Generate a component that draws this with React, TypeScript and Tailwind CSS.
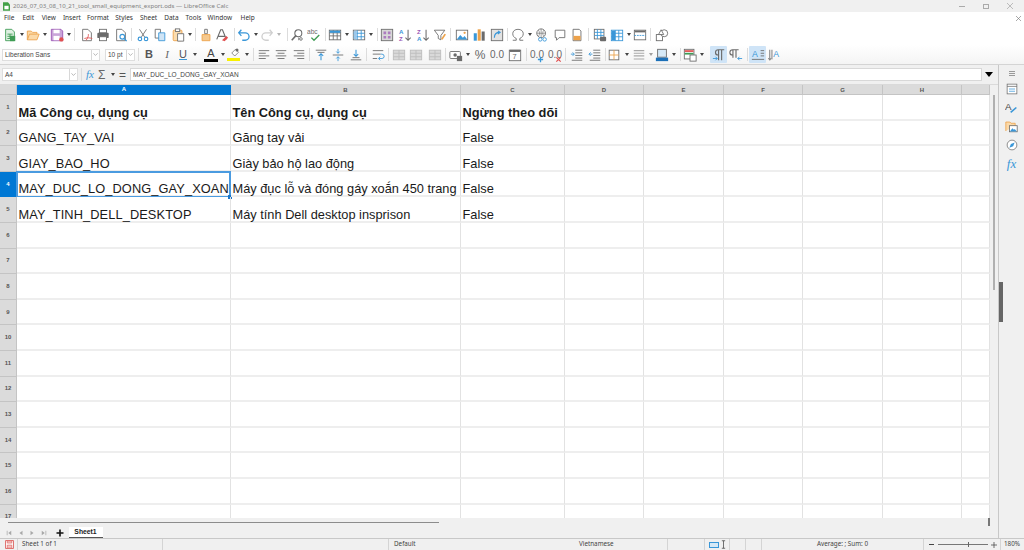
import React from 'react';

const GRAY = '#6b6b6b';
const BLUE = '#3a97d8';
const ORANGE = '#eda24a';
const GREEN = '#3f9c55';
const PURPLE = '#9a55b5';
const RED = '#e05050';

const paths: Record<string, React.ReactNode> = {
  newdoc: (
    <>
      <path d="M3 1.500h7l3 3v10H3z" fill="#dff0e2" stroke={GREEN} />
      <path d="M5 7h6M5 9.500h6M5 12h6M8 7v5" stroke={GREEN} />
      <rect x="8" y="9" width="6" height="6" fill={GREEN} />
    </>
  ),
  open: (
    <>
      <path d="M1.500 13.500v-10h4.500l1.500 1.500h5v2" fill="#fbd9a8" stroke={ORANGE} />
      <path d="M1.500 13.500l2.500-6.500h11l-2.500 6.500z" fill="#fbd9a8" stroke={ORANGE} />
    </>
  ),
  save: (
    <>
      <path d="M1.500 1.500h11l2 2v11h-13z" fill="#c9a5d8" stroke={PURPLE} />
      <rect x="4" y="2" width="7" height="4" fill="#fff" />
      <rect x="4" y="9" width="7" height="5" fill="#fff" />
      <circle cx="13" cy="13" r="2.500" fill={RED} />
    </>
  ),
  pdf: (
    <>
      <path d="M3 1.500h6l4 4v9H3z" fill="#fff" stroke={GRAY} />
      <path d="M7 14c2-3 3-5 2.500-7 M5 12c3-1 6-1 9 0" stroke={RED} fill="none" />
    </>
  ),
  print: (
    <>
      <rect x="4" y="1.500" width="8" height="4" fill="#fff" stroke={GRAY} />
      <rect x="1.500" y="5.500" width="13" height="6" rx="1" fill={GRAY} />
      <rect x="4" y="10" width="8" height="4.500" fill="#fff" stroke={GRAY} />
    </>
  ),
  preview: (
    <>
      <path d="M3 1.500h6l4 4v9H3z" fill="#fff" stroke={GRAY} />
      <circle cx="9.500" cy="10" r="2.700" fill="none" stroke={BLUE} strokeWidth="1.300" />
      <path d="M11.500 12l3 3" stroke={BLUE} strokeWidth="1.500" />
    </>
  ),
  cut: (
    <>
      <path d="M4 1.500l6 9M12 1.500l-6 9" stroke={GRAY} fill="none" />
      <circle cx="4.500" cy="12.500" r="2" fill="none" stroke={BLUE} strokeWidth="1.300" />
      <circle cx="11.500" cy="12.500" r="2" fill="none" stroke={BLUE} strokeWidth="1.300" />
    </>
  ),
  copy: (
    <>
      <path d="M2.500 1.500h6v10h-6z" fill="#fff" stroke={GRAY} />
      <path d="M6.500 5.500h7v9h-7z" fill="#cfe4f5" stroke={BLUE} />
    </>
  ),
  paste: (
    <>
      <rect x="2.500" y="2.500" width="10" height="12" rx="1" fill="#fbdcae" stroke={ORANGE} />
      <rect x="5" y="1" width="5" height="3" fill="#fff" stroke={GRAY} />
      <path d="M7.500 6.500h7v8.500h-7z" fill="#fff" stroke={GRAY} />
    </>
  ),
  clone: (
    <>
      <path d="M6.500 1.500h3v5h-3z" fill="#fff" stroke={GRAY} />
      <path d="M3.500 7.500h9v7h-9z" fill="#f6c98e" stroke={ORANGE} />
    </>
  ),
  clear: (
    <>
      <path d="M2 13L6.500 2h2L13 13M4 9.500h7" stroke={GRAY} strokeWidth="1.300" fill="none" />
      <path d="M8 14l5-5 2 2-4 4z" fill={RED} />
    </>
  ),
  undo: <path d="M5 2L2 5.500 5 9M2.500 5.500h7a4 4 0 0 1 0 8.500H6" stroke={BLUE} strokeWidth="1.500" fill="none" />,
  redo: <path d="M11 2l3 3.500L11 9M13.500 5.500h-7a4 4 0 0 0 0 8.500H10" stroke="#cfcfcf" strokeWidth="1.500" fill="none" />,
  find: (
    <>
      <circle cx="9.500" cy="6" r="4" fill="none" stroke={GRAY} strokeWidth="1.200" />
      <path d="M6.500 9L2 14" stroke={GRAY} strokeWidth="1.800" />
      <path d="M10 14v-3M12.500 14a1.500 1.500 0 1 1 0-3 1.500 1.500 0 0 1 0 3z" stroke={GRAY} fill="none" />
    </>
  ),
  spell: (
    <>
      <text x="0" y="7" fontSize="7.500" fontFamily="Liberation Sans" fill={GRAY}>abc</text>
      <path d="M5 11l3 3 6-6" stroke={GREEN} strokeWidth="1.600" fill="none" />
    </>
  ),
  rows: (
    <>
      <rect x="1.500" y="2.500" width="13" height="11" fill="#fff" stroke={GRAY} />
      <path d="M1.500 5.500h13M1.500 9h13M6 2.500v11M10.500 2.500v11" stroke={GRAY} />
      <rect x="2" y="3" width="12" height="2.500" fill={BLUE} />
    </>
  ),
  cols: (
    <>
      <rect x="1.500" y="2.500" width="13" height="11" fill="#fff" stroke={GRAY} />
      <path d="M1.500 6h13M1.500 10h13M6 2.500v11M10.500 2.500v11" stroke={BLUE} />
      <rect x="2" y="3" width="3.500" height="10" fill="#9cc8ea" />
    </>
  ),
  ptable: (
    <>
      <rect x="1.500" y="1.500" width="13" height="13" fill="#d8d8d8" stroke={GRAY} />
      <path d="M4 4h3v3H4zM9 4h3v3H9zM4 9h3v3H4zM9 9h3v3H9z" fill={PURPLE} opacity="0.7" />
    </>
  ),
  sortaz: (
    <>
      <text x="1" y="7" fontSize="7" fontFamily="Liberation Sans" fontWeight="700" fill={BLUE}>A</text>
      <text x="1" y="15" fontSize="7" fontFamily="Liberation Sans" fontWeight="700" fill={PURPLE}>Z</text>
      <path d="M11.500 2v12M8.500 11l3 3 3-3" stroke={GRAY} strokeWidth="1.200" fill="none" />
    </>
  ),
  sortza: (
    <>
      <text x="1" y="7" fontSize="7" fontFamily="Liberation Sans" fontWeight="700" fill={PURPLE}>Z</text>
      <text x="1" y="15" fontSize="7" fontFamily="Liberation Sans" fontWeight="700" fill={BLUE}>A</text>
      <path d="M11.500 2v12M8.500 11l3 3 3-3" stroke={GRAY} strokeWidth="1.200" fill="none" />
    </>
  ),
  filter: (
    <>
      <path d="M1.500 2.500h12l-4.500 6v5l-3-1.500V8.500z" fill="#fff" stroke={GRAY} />
      <path d="M10 13l4-6" stroke={ORANGE} strokeWidth="2" />
    </>
  ),
  image: (
    <>
      <rect x="1.500" y="2.500" width="13" height="11" fill="#fff" stroke={GRAY} />
      <path d="M2 13l4-5 3 3 2-2 3 4z" fill={BLUE} />
      <circle cx="11" cy="5.500" r="1.300" fill={ORANGE} />
    </>
  ),
  chart: (
    <>
      <rect x="2" y="6" width="3.500" height="8.500" fill={BLUE} />
      <rect x="6.500" y="1.500" width="3.500" height="13" fill={ORANGE} />
      <rect x="11" y="4" width="3.500" height="10.500" fill={GRAY} />
    </>
  ),
  pivot: (
    <>
      <rect x="1.500" y="1.500" width="13" height="13" fill="#e2e2e2" stroke={GRAY} />
      <path d="M5 11c0-4 2-6 6-6M9 3.500L11.500 5 9 7" stroke={BLUE} strokeWidth="1.300" fill="none" />
    </>
  ),
  omega: <path d="M2 14h4v-2C3.500 11 2 9 2 6.500 2 3.500 4.500 1.500 8 1.500s6 2 6 5c0 2.500-1.500 4.500-4 5.500v2h4" stroke={GRAY} fill="none" />,
  link: (
    <>
      <circle cx="7" cy="6" r="5" fill="none" stroke={GRAY} />
      <path d="M2 6h10M7 1v10M4 2.500c1.500 2 1.500 5 0 7M10 2.500c-1.500 2-1.500 5 0 7" stroke={GRAY} fill="none" strokeWidth="0.700" />
      <circle cx="6" cy="13" r="2" fill="#fff" stroke={BLUE} />
      <circle cx="11" cy="13" r="2" fill="#fff" stroke={BLUE} />
    </>
  ),
  comment: <path d="M2.500 2.500h11v8.500H7l-3 3v-3H2.500z" fill="#fff" stroke={GRAY} />,
  header: (
    <>
      <path d="M3.500 1.500h7l2 2v11h-9z" fill="#fff" stroke={GRAY} />
      <rect x="4" y="9" width="8" height="5" fill={ORANGE} />
    </>
  ),
  printrange: (
    <>
      <rect x="1.500" y="1.500" width="11" height="11" fill="#fff" stroke={GRAY} />
      <path d="M1.500 5h11M1.500 8.500h11M5 1.500v11M9 1.500v11" stroke={BLUE} />
      <rect x="8" y="10" width="7" height="5" rx="1" fill={GRAY} />
    </>
  ),
  freeze: (
    <>
      <rect x="1.500" y="2.500" width="13" height="12" fill="#fff" stroke={BLUE} />
      <path d="M1.500 6h13M1.500 10h13M6 2.500v12M10 2.500v12" stroke={BLUE} />
      <rect x="2" y="3" width="4" height="11" fill={BLUE} />
    </>
  ),
  split: (
    <>
      <rect x="1.500" y="2.500" width="13" height="11" fill="#fff" stroke={GRAY} />
      <rect x="2" y="3" width="12" height="2" fill={GRAY} />
      <path d="M1.500 8.500h13" stroke={BLUE} strokeDasharray="2 1" />
    </>
  ),
  shapes: (
    <>
      <rect x="1.500" y="7.500" width="7" height="7" fill="#fff" stroke={GRAY} />
      <circle cx="10.500" cy="6" r="4" fill="#fff" stroke={GRAY} />
      <path d="M4 7.500L7 2l3 5.500z" fill="#fff" stroke={GRAY} />
    </>
  ),
  alignleft: <path d="M2 3h12M2 6h8M2 9h12M2 12h8" stroke={GRAY} />,
  aligncenter: <path d="M2 3h12M4 6h8M2 9h12M4 12h8" stroke={GRAY} />,
  alignright: <path d="M2 3h12M6 6h8M2 9h12M6 12h8" stroke={GRAY} />,
  vtop: (
    <>
      <path d="M2 2.500h12M4 5h8" stroke={GRAY} />
      <path d="M8 14V7M5.500 9L8 6.500 10.500 9" stroke={BLUE} fill="none" strokeWidth="1.200" />
    </>
  ),
  vcenter: (
    <>
      <path d="M2 8h12" stroke={GRAY} />
      <path d="M8 1v5M6 4l2 2 2-2M8 15v-5M6 12l2-2 2 2" stroke={BLUE} fill="none" />
    </>
  ),
  vbottom: (
    <>
      <path d="M2 13.500h12M4 11h8" stroke={GRAY} />
      <path d="M8 2v7M5.500 7L8 9.500 10.500 7" stroke={BLUE} fill="none" strokeWidth="1.200" />
    </>
  ),
  wrap: (
    <>
      <path d="M2 3h12M2 7h9" stroke={GRAY} />
      <path d="M2 12h5" stroke={GRAY} />
      <path d="M11 7h1.500a2.500 2.500 0 0 1 0 5H9M10.500 10L8.500 12l2 2" stroke={BLUE} fill="none" />
    </>
  ),
  merge: (
    <>
      <rect x="1.500" y="2.500" width="13" height="11" fill="#d9d9d9" stroke="#bdbdbd" />
      <path d="M1.500 6h13M1.500 10h13M8 2.500v11" stroke="#bdbdbd" />
    </>
  ),
  money: (
    <>
      <rect x="1" y="4" width="12" height="8" rx="1" fill="#fff" stroke={GRAY} />
      <circle cx="7" cy="8" r="2" fill={GRAY} />
      <rect x="9" y="9" width="6" height="6" fill={GRAY} />
    </>
  ),
  date: (
    <>
      <rect x="1.500" y="2.500" width="13" height="12" fill="#fff" stroke={GRAY} />
      <rect x="2" y="2" width="12" height="2.500" fill={GRAY} />
      <text x="5" y="13" fontSize="8.500" fontFamily="Liberation Sans" fill={GRAY}>7</text>
    </>
  ),
  indentmore: (
    <>
      <path d="M6 2.500h8M6 5.500h8M6 8.500h8M6 11.500h8M2 14h12" stroke={GRAY} />
      <path d="M1 7h3.500M3 5l2 2-2 2" stroke={BLUE} fill="none" />
    </>
  ),
  indentless: (
    <>
      <path d="M6 2.500h8M6 5.500h8M6 8.500h8M6 11.500h8M2 14h12" stroke={GRAY} />
      <path d="M5 7H1.500M3 5L1 7l2 2" stroke={BLUE} fill="none" />
    </>
  ),
  borders: (
    <>
      <rect x="2.500" y="2.500" width="11" height="11" fill="#fff" stroke={GRAY} />
      <path d="M2.500 8h11M8 2.500v11" stroke={ORANGE} />
    </>
  ),
  borderstyle: <path d="M2 3h12M2 6h12M2 9h12M2 12.500h12" stroke="#a9a9a9" strokeWidth="1.200" />,
  bordercolor: (
    <>
      <rect x="3" y="1.500" width="10" height="9" fill="#d6e9f7" stroke={GRAY} />
      <rect x="1" y="11" width="14" height="4" fill="#1c70b8" />
    </>
  ),
  cond: (
    <>
      <rect x="1.500" y="1.500" width="11" height="11" fill="#fff" stroke={GRAY} />
      <path d="M2 3.500h10" stroke={RED} strokeWidth="2" />
      <path d="M2 6.500h10" stroke={GREEN} strokeWidth="2" />
      <rect x="8" y="8" width="7" height="7" fill="#fff" stroke={GRAY} />
    </>
  ),
  ltr: (
    <>
      <path d="M7.500 14V2M11 14V2M14 2H7a3 3 0 0 0 0 6h1" stroke={GRAY} fill="none" strokeWidth="1.300" />
      <path d="M1 12h5M4 10l2 2-2 2" stroke={BLUE} fill="none" />
    </>
  ),
  rtl: (
    <>
      <path d="M4.500 11V2M8 11V2M11 2H4a3 3 0 0 0 0 6h1" stroke={GRAY} fill="none" strokeWidth="1.300" />
      <path d="M15 12h-5M12 10l-2 2 2 2" stroke={BLUE} fill="none" />
    </>
  ),
  texthoriz: (
    <>
      <text x="1" y="10" fontSize="10" fontFamily="Liberation Sans" fill={BLUE}>A</text>
      <path d="M1 13h14M11 3h4M11 6h4M11 9h4" stroke={GRAY} />
    </>
  ),
  textvert: (
    <>
      <text x="6" y="10" fontSize="10" fontFamily="Liberation Sans" fill={BLUE}>A</text>
      <path d="M2 2v11M4.500 2v11M0.500 11.500L2 14l1.500-2.500" stroke={GRAY} fill="none" />
    </>
  ),
  properties: (
    <>
      <rect x="1.500" y="1.500" width="13" height="13" fill="#fff" stroke={GRAY} />
      <path d="M1.500 4.500h13" stroke={GRAY} />
      <path d="M4 8h8M4 11h8" stroke={BLUE} />
    </>
  ),
  styles: (
    <>
      <text x="0" y="11" fontSize="12" fontFamily="Liberation Sans" fill="#444">A</text>
      <path d="M7 14l7-6" stroke={BLUE} strokeWidth="2" />
    </>
  ),
  gallery: (
    <>
      <path d="M1 13.500v-11h5l1.500 1.500h5v3" fill="#fbd9a8" stroke={ORANGE} />
      <rect x="5.500" y="7" width="9.500" height="7.500" fill="#fff" stroke={GRAY} />
      <path d="M6 14l3-4 2 2 1-1 2.500 3z" fill={BLUE} />
    </>
  ),
  navigator: (
    <>
      <circle cx="8" cy="8" r="6.500" fill="#fff" stroke={GRAY} />
      <path d="M11.500 4.500L9.500 9.500 4.500 11.500 6.500 6.500z" fill={BLUE} />
    </>
  ),
  addmark: <path d="M12 9v6M9 12h6" stroke={BLUE} strokeWidth="1.500" />,
  delmark: <path d="M9.500 9.500l5 5M14.500 9.500l-5 5" stroke={RED} strokeWidth="1.300" />,
};

const Icon = ({ name, className = 'w-[14px] h-[14px]' }: { name: string; className?: string }) => (
  <svg viewBox="0 0 16 16" className={className}>
    {paths[name]}
  </svg>
);

const Btn = ({ name, className = '' }: { name: string; className?: string }) => (
  <div className={`w-[16px] h-[17px] shrink-0 flex items-center justify-center ${className}`}>
    <Icon name={name} />
  </div>
);

const Drop = ({ className = '' }: { className?: string }) => (
  <div className={`w-[7px] shrink-0 flex items-center justify-center ${className}`}>
    <div className="border-x-[2.5px] border-t-[3px] border-x-transparent border-t-[#444]" />
  </div>
);

const Sep = ({ className = '' }: { className?: string }) => (
  <div className={`w-px h-[13px] shrink-0 bg-[#dcdcdc] ${className}`} />
);

const TextBtn = ({ children, className = '' }: { children: React.ReactNode; className?: string }) => (
  <div className={`w-[16px] h-[17px] shrink-0 flex items-center justify-center ${className}`}>{children}</div>
);

const Decimal = ({ mark, className = '' }: { mark: string; className?: string }) => (
  <div className={`relative w-[16px] h-[17px] shrink-0 flex items-center justify-center text-[10px] text-[#6b6b6b] ${className}`}>
    <span>0.0</span>
    <Icon name={mark} className="absolute inset-0 m-auto w-[14px] h-[14px] translate-y-[1px]" />
  </div>
);

const Combo = ({ label, className }: { label: string; className: string }) => (
  <div className={`shrink-0 bg-white border border-[#dedede] flex items-center justify-between text-[6.5px] pl-[2px] text-[#444] ${className}`}>
    <span>{label}</span>
    <span className="w-[8px] h-full border-l border-[#d8d8d8] flex items-center justify-center">
      <svg viewBox="0 0 8 5" className="w-[5px] h-[3px]">
        <path d="M0.500 0.500L4 4l3.500-3.500" stroke="#888" fill="none" />
      </svg>
    </span>
  </div>
);

const NavArrow = ({ d }: { d: string }) => (
  <svg viewBox="0 0 8 8" className="w-[6px] h-[6px] shrink-0">
    <path d={d} fill="#a8a8a8" />
  </svg>
);

const StatusSep = ({ className = '' }: { className?: string }) => (
  <div className={`w-px h-full shrink-0 bg-[#d4d4d4] ${className}`} />
);

const COL_TEMPLATE = 'grid-cols-[17px_214px_230px_104px_79px_80px_79px_80px_79px_28px]';
const HEADERS = ['A', 'B', 'C', 'D', 'E', 'F', 'G', 'H', ''];

const ROWS: { n: number; a?: string; b?: string; c?: string; bold?: boolean }[] = [
  { n: 1, a: 'Mã Công cụ, dụng cụ', b: 'Tên Công cụ, dụng cụ', c: 'Ngừng theo dõi', bold: true },
  { n: 2, a: 'GANG_TAY_VAI', b: 'Găng tay vải', c: 'False' },
  { n: 3, a: 'GIAY_BAO_HO', b: 'Giày bảo hộ lao động', c: 'False' },
  { n: 4, a: 'MAY_DUC_LO_DONG_GAY_XOAN', b: 'Máy đục lỗ và đóng gáy xoắn 450 trang', c: 'False' },
  { n: 5, a: 'MAY_TINH_DELL_DESKTOP', b: 'Máy tính Dell desktop insprison', c: 'False' },
  ...Array.from({ length: 12 }, (_, i) => ({ n: i + 6 })),
];

const Cell = ({ text, bold, selected, code }: { text?: string; bold?: boolean; selected?: boolean; code?: boolean }) => (
  <div
    className={`relative h-[25.6px] border-r border-r-[#e2e2e2] border-b-2 border-b-[#eeeeee] flex items-end pl-[1.5px] whitespace-nowrap text-[12.8px] leading-[12px] text-[#1a1a1a] ${
      bold ? 'font-bold' : ''
    } ${code ? 'tracking-[0.1px]' : ''}`}
  >
    <span className="relative z-10">{text}</span>
    {selected && (
      <div className="absolute -left-px -top-px right-[-1px] bottom-[-2px] border-2 border-b-[1px] border-[#4a9be0]">
        <div className="absolute -right-[3px] -bottom-[3px] w-[4px] h-[4px] bg-[#1c76c8]" />
      </div>
    )}
  </div>
);

export default function App() {
  return (
    <div className="w-[1024px] h-[550px] overflow-hidden flex flex-col bg-white font-['Noto_Sans',sans-serif] text-[#333]">
      {/* title bar */}
      <div className="h-[12px] shrink-0 bg-[#f0f0f0] flex items-center pl-[3px] pr-[11px]">
        <svg viewBox="0 0 10 12" className="w-[7px] h-[9px]">
          <path d="M0 0h7l3 3v9H0z" fill="#43a047" />
          <path d="M2 5h6v5H2z" fill="#fff" />
        </svg>
        <span className="ml-[3px] text-[6.1px] leading-none text-[#808080]">
          2026_07_03_08_10_21_tool_small_equipment_export.ods — LibreOffice Calc
        </span>
        <div className="ml-auto flex items-center gap-[18px]">
          <div className="w-[6px] h-px bg-[#aaa]" />
          <div className="w-[6px] h-[5px] border border-[#aaa]" />
          <svg viewBox="0 0 8 8" className="w-[6px] h-[6px]">
            <path d="M0 0l8 8M8 0L0 8" stroke="#aaa" />
          </svg>
        </div>
      </div>

      {/* menu bar */}
      <div className="h-[12px] shrink-0 bg-white flex items-center text-[6.5px] leading-none text-[#333]">
        <span className="ml-[4px]">File</span>
        <span className="ml-[8px]">Edit</span>
        <span className="ml-[7.600px]">View</span>
        <span className="ml-[7px]">Insert</span>
        <span className="ml-[6px]">Format</span>
        <span className="ml-[6.300px]">Styles</span>
        <span className="ml-[7px]">Sheet</span>
        <span className="ml-[7px]">Data</span>
        <span className="ml-[7px]">Tools</span>
        <span className="ml-[6px]">Window</span>
        <span className="ml-[8.500px]">Help</span>
        <svg viewBox="0 0 8 8" className="ml-auto mr-[3px] w-[5px] h-[5px]">
          <path d="M0 0l8 8M8 0L0 8" stroke="#777" />
        </svg>
      </div>

      {/* standard toolbar */}
      <div className="h-[21px] shrink-0 bg-white flex items-center pl-[2px]">
        <Btn name="newdoc" /><Drop />
        <Btn name="open" /><Drop />
        <Btn name="save" className="ml-px" /><Drop />
        <Sep className="ml-[2px]" />
        <Btn name="pdf" className="ml-[4px]" />
        <Btn name="print" />
        <Btn name="preview" className="ml-[2px]" />
        <Sep className="ml-[2px]" />
        <Btn name="cut" className="ml-[3px]" />
        <Btn name="copy" className="ml-px" />
        <Btn name="paste" className="ml-[2px]" /><Drop />
        <Sep className="ml-[2px]" />
        <Btn name="clone" className="ml-[2px]" />
        <Btn name="clear" />
        <Sep className="ml-[4px]" />
        <Btn name="undo" className="ml-px" /><Drop />
        <Btn name="redo" /><Drop className="opacity-40" />
        <Sep className="ml-[5px]" />
        <Btn name="find" className="ml-px" />
        <Btn name="spell" className="ml-px" />
        <Sep className="ml-[3px]" />
        <Btn name="rows" className="ml-px" /><Drop />
        <Btn name="cols" className="ml-px" /><Drop />
        <Sep className="ml-[3px]" />
        <Btn name="ptable" className="ml-px" />
        <Btn name="sortaz" className="ml-[2px]" />
        <Btn name="sortza" className="ml-[2px]" />
        <Btn name="filter" className="ml-px" />
        <Sep className="ml-[2px]" />
        <Btn name="image" className="ml-[3px]" />
        <Btn name="chart" className="ml-px" />
        <Btn name="pivot" className="ml-[2px]" />
        <Sep className="ml-[2px]" />
        <Btn name="omega" className="ml-[2px]" /><Drop />
        <Btn name="link" className="ml-px" />
        <Btn name="comment" className="ml-[2px]" />
        <Btn name="header" className="ml-px" />
        <Sep className="ml-[3px]" />
        <Btn name="printrange" className="ml-[3px]" />
        <Btn name="freeze" className="ml-px" /><Drop />
        <Btn name="split" />
        <Sep className="ml-[2px]" />
        <Btn name="shapes" className="ml-[3px]" />
      </div>

      {/* formatting toolbar */}
      <div className="h-[20px] shrink-0 bg-gradient-to-b from-white to-[#f4f4f4] border-b border-[#d4d4d4] flex items-center pl-[2px] font-['Liberation_Sans',sans-serif]">
        <Combo label="Liberation Sans" className="w-[98px] h-[12px]" />
        <Combo label="10 pt" className="ml-[5px] w-[30px] h-[12px]" />
        <Sep className="ml-[3px]" />
        <TextBtn className="ml-[2px] text-[11px] font-bold text-[#555]">B</TextBtn>
        <TextBtn className="ml-[2px] text-[11px] italic font-['Liberation_Serif',serif] text-[#666]">I</TextBtn>
        <TextBtn className="text-[11px] text-[#555] underline decoration-[#3a97d8]">U</TextBtn>
        <Drop />
        <TextBtn className="ml-[5px] relative text-[11px] leading-[11px] text-[#444] pb-[3px]">
          A
          <div className="absolute left-[1px] right-[1px] bottom-[1px] h-[3px] bg-black" />
        </TextBtn>
        <Drop />
        <TextBtn className="relative">
          <svg viewBox="0 0 16 16" className="w-[12px] h-[12px] mb-[4px]">
            <path d="M5 8l5-5 4 4-5 5z" fill="#fff" stroke={GRAY} />
            <circle cx="12" cy="4" r="2" fill={GRAY} />
          </svg>
          <div className="absolute left-[1px] right-[2px] bottom-[2px] h-[3px] bg-[#f8f000]" />
        </TextBtn>
        <Drop className="ml-px" />
        <Sep className="ml-[3px]" />
        <Btn name="alignleft" className="ml-[2px]" />
        <Btn name="aligncenter" className="ml-px" />
        <Btn name="alignright" className="ml-[2px]" />
        <Sep className="ml-[2px]" />
        <Btn name="vtop" className="ml-[3px]" />
        <Btn name="vcenter" className="ml-px" />
        <Btn name="vbottom" className="ml-[2px]" />
        <Sep className="ml-[2px]" />
        <Btn name="wrap" className="ml-[3px]" />
        <Sep className="ml-[2px]" />
        <Btn name="merge" className="ml-[2px]" />
        <Btn name="merge" className="ml-px" />
        <Btn name="merge" className="ml-[3px]" />
        <Sep className="ml-[2px]" />
        <Btn name="money" className="ml-[2px]" /><Drop />
        <TextBtn className="ml-px text-[12px] text-[#666]">%</TextBtn>
        <TextBtn className="ml-px text-[10px] text-[#666]">0.0</TextBtn>
        <Btn name="date" className="ml-[2px]" />
        <Sep className="ml-[3px]" />
        <Decimal mark="addmark" className="ml-[2px]" />
        <Decimal mark="delmark" className="ml-[2px]" />
        <Sep className="ml-[2px]" />
        <Btn name="indentmore" className="ml-[3px]" />
        <Btn name="indentless" className="ml-[2px]" />
        <Sep className="ml-[2px]" />
        <Btn name="borders" /><Drop className="ml-px" />
        <Btn name="borderstyle" className="ml-px" /><Drop className="opacity-50" />
        <Btn name="bordercolor" /><Drop />
        <Sep className="ml-[3px]" />
        <Btn name="cond" className="ml-px" /><Drop />
        <Btn name="ltr" className="ml-[5px] w-[17px] bg-[#cfe4f7] rounded-[1px]" />
        <Btn name="rtl" className="ml-px" />
        <Sep className="ml-[3px]" />
        <Btn name="texthoriz" className="ml-px w-[17px] bg-[#cfe4f7] rounded-[1px]" />
        <Btn name="textvert" className="ml-px" />
      </div>

      <div className="h-[473px] shrink-0 flex">
        <div className="flex-1 min-w-0 flex flex-col">
          {/* formula bar */}
          <div className="h-[20px] shrink-0 bg-[#f0f0f0] flex items-center pl-[2px] border-b border-[#dadada] font-['Liberation_Sans',sans-serif]">
            <Combo label="A4" className="w-[76px] h-[13px]" />
            <Sep className="ml-[3px]" />
            <span className="ml-[4px] w-[10px] text-[11px] leading-none italic font-['Liberation_Serif',serif] text-[#3a97d8]">fx</span>
            <span className="ml-[2px] w-[10px] text-[12px] leading-none text-[#666]">Σ</span>
            <Drop className="ml-[1px]" />
            <span className="ml-[3px] w-[9px] text-[12px] leading-none text-[#555]">=</span>
            <div className="ml-[2px] w-[852px] h-[13px] bg-white border border-[#d8d8d8] flex items-center pl-[2px] text-[6.5px] text-[#444]">
              MAY_DUC_LO_DONG_GAY_XOAN
            </div>
            <div className="ml-[3px] border-x-[4.5px] border-t-[5px] border-x-transparent border-t-black" />
          </div>

          {/* grid */}
          <div className="h-[433px] shrink-0 overflow-hidden font-['Liberation_Sans',sans-serif] flex">
            <div className="w-[990px] shrink-0">
              <div className={`grid ${COL_TEMPLATE} h-[10px] bg-[#dbdbdb] border-b border-[#c4c4c4] text-[6px] leading-[10px] font-bold text-[#555] text-center`}>
                <div className="border-r border-[#c8c8c8]" />
                {HEADERS.map((h, i) => (
                  <div key={i} className={i === 0 ? 'bg-[#0078d4] text-white -mt-px' : 'border-r border-[#c4c4c4]'}>
                    {h}
                  </div>
                ))}
              </div>
              {ROWS.map((r) => (
                <div key={r.n} className={`grid ${COL_TEMPLATE}`}>
                  <div
                    className={`h-[25.6px] flex items-center justify-center text-[6px] font-bold border-b border-r ${
                      r.n === 4 ? 'bg-[#0078d4] text-white border-[#0078d4]' : 'bg-[#dbdbdb] text-[#555] border-[#c4c4c4]'
                    }`}
                  >
                    {r.n}
                  </div>
                  <Cell text={r.a} bold={r.bold} selected={r.n === 4} code={!r.bold} />
                  <Cell text={r.b} bold={r.bold} />
                  <Cell text={r.c} bold={r.bold} />
                  <Cell />
                  <Cell />
                  <Cell />
                  <Cell />
                  <Cell />
                  <Cell />
                </div>
              ))}
            </div>
            {/* vertical scrollbar */}
            <div className="flex-1 bg-[#f0f0f0] pt-[10px] flex justify-center">
              <div className="w-[2px] h-[195px] bg-[#b0b0b0]" />
            </div>
          </div>

          {/* sheet tabs */}
          <div className="h-[20px] shrink-0 bg-[#f0f0f0] flex flex-col">
            <div className="h-[9px] shrink-0 flex items-start pl-[8px]">
              <div className="w-[431px] h-px mt-[4px] bg-[#8c8c8c]" />
              <div className="ml-[549px] w-[2px] h-[8px] bg-[#777]" />
            </div>
            <div className="flex-1 flex items-end pl-[6px]">
              <div className="h-[11px] flex items-center gap-[5.500px]">
                <NavArrow d="M1 1h1v6H1zM7 1v6L3 4z" />
                <NavArrow d="M6 1v6L2 4z" />
                <NavArrow d="M2 1v6l4-3z" />
                <NavArrow d="M7 1h-1v6h1zM1 1v6l4-3z" />
              </div>
              <span className="ml-[9px] h-[11px] flex items-center">
                <svg viewBox="0 0 8 8" className="w-[8px] h-[8px]">
                  <path d="M4 0.500v7M0.500 4h7" stroke="#111" strokeWidth="1.600" />
                </svg>
              </span>
              <div className="ml-[5px] w-[34px] h-[11px] bg-white border-b-[1px] border-[#555] flex items-center justify-center text-[6.8px] font-bold text-[#222] font-['Liberation_Sans',sans-serif]">
                Sheet1
              </div>
            </div>
          </div>
        </div>

        {/* sidebar */}
        <div className="w-[26px] shrink-0 bg-[#f0f0f0] border-l border-[#c8c8c8] relative flex flex-col items-center pt-[6px]">
          <div className="w-[6px] h-[5px] flex flex-col justify-between">
            <div className="h-px bg-[#999]" /><div className="h-px bg-[#999]" /><div className="h-px bg-[#999]" />
          </div>
          <Icon name="properties" className="mt-[7px] w-[12px] h-[12px]" />
          <Icon name="styles" className="mt-[6px] w-[13px] h-[13px]" />
          <Icon name="gallery" className="mt-[6px] w-[13px] h-[13px]" />
          <Icon name="navigator" className="mt-[6px] w-[12px] h-[12px]" />
          <span className="mt-[6px] text-[13px] leading-none italic font-['Liberation_Serif',serif] text-[#3a97d8]">fx</span>
          <div className="absolute left-0 top-[217px] w-[4px] h-[40px] bg-[#666]" />
        </div>
      </div>

      {/* status bar */}
      <div className="h-[12px] shrink-0 bg-[#f0f0f0] border-t border-[#c8c8c8] flex items-center text-[6.3px] leading-none text-[#444]">
        <svg viewBox="0 0 16 16" className="ml-[5px] w-[9px] h-[9px] shrink-0">
          <path d="M1 1h14v14H1z" fill="#fff" stroke="#d9534f" strokeWidth="1.500" />
          <path d="M4 1.500h8v4H4zM4 9h8v5.500H4z" fill="#f3c4c2" stroke="#d9534f" />
        </svg>
        <StatusSep className="ml-[3px]" />
        <span className="ml-[4px] w-[140px] shrink-0">Sheet 1 of 1</span>
        <StatusSep />
        <StatusSep className="ml-[225px]" />
        <span className="ml-[5px] w-[185px] shrink-0">Default</span>
        <span className="w-[88px] shrink-0">Vietnamese</span>
        <StatusSep />
        <StatusSep className="ml-[36px]" />
        <div className="ml-[4px] w-[10px] h-[6px] shrink-0 bg-[#d6e9f7] border border-[#3a97d8]" />
        <svg viewBox="0 0 6 10" className="ml-[2px] w-[5px] h-[9px] shrink-0">
          <path d="M1 0.500h4M3 0.500v9M1 9.500h4" stroke="#555" fill="none" />
        </svg>
        <StatusSep className="ml-[3px]" />
        <StatusSep className="ml-[15px]" />
        <StatusSep className="ml-[15px]" />
        <span className="w-[161px] shrink-0 text-center">Average: ; Sum: 0</span>
        <StatusSep />
        <div className="ml-[5px] w-[5px] h-px shrink-0 bg-[#444]" />
        <div className="ml-[4px] w-[50px] h-px shrink-0 bg-[#777] relative">
          <div className="absolute left-[30px] top-[-2px] w-px h-[5px] bg-[#666]" />
        </div>
        <svg viewBox="0 0 8 8" className="ml-[3px] w-[6px] h-[6px] shrink-0">
          <path d="M4 0v8M0 4h8" stroke="#444" />
        </svg>
        <StatusSep className="ml-[3px]" />
        <span className="ml-[3px]">180%</span>
      </div>
    </div>
  );
}
